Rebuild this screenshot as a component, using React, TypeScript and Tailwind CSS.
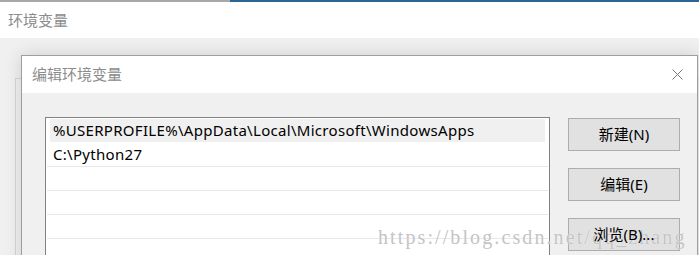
const rows = ["%USERPROFILE%\\AppData\\Local\\Microsoft\\WindowsApps", "C:\\Python27", "", "", "", ""];

const buttons = ["新建(N)", "编辑(E)", "浏览(B)..."];

function CloseIcon() {
  return (
    <svg width="11" height="11" viewBox="0 0 11 11" className="text-[#7a7a7a]">
      <path d="M0.5 0.5 L10.5 10.5 M10.5 0.5 L0.5 10.5" stroke="currentColor" strokeWidth="1" fill="none" />
    </svg>
  );
}

export default function App() {
  return (
    <div className="relative w-[699px] h-[255px] overflow-hidden bg-[#f0f0f0] font-['Noto_Sans','Noto_Sans_CJK_SC',sans-serif] text-[15px] text-black">
      {/* parent window */}
      <div className="flex h-[2px]">
        <div className="w-[230px] bg-[#a8a8a8]" />
        <div className="flex-1 bg-[#2b6696]" />
      </div>
      <div className="h-[36px] bg-white flex items-center pl-[8px] text-[#8c8c8c]">环境变量</div>
      <div className="ml-[15px] mt-[40px] h-[200px] border-l border-t border-[#d6d6d6]" />

      {/* dialog */}
      <div className="absolute left-[21px] top-[55px] w-[677px] h-[215px] border border-[#9e9e9e] bg-[#f0f0f0] shadow-[0_0_16px_rgba(0,0,0,0.14)]">
        <div className="h-[37px] bg-white flex items-center justify-between pl-[10px] pr-[14px]">
          <span className="text-[#8c8c8c]">编辑环境变量</span>
          <CloseIcon />
        </div>
        <div className="flex pt-[24px] pl-[23px]">
          <div className="w-[505px] h-[150px] border border-[#828282] bg-white pt-px px-px">
            {rows.map((r, i) => (
              <div key={i} className={i === 0 ? "h-[24px] border-b border-white" : "h-[24px] border-b border-[#e8e8e8]"}>
                <div className={i === 0 ? "h-full mx-[3px] bg-[#f0f0f0] flex items-center px-[3px] leading-none tracking-[0.3px]" : "h-full mx-[3px] flex items-center px-[3px] leading-none tracking-[0.3px]"}>
                  {r}
                </div>
              </div>
            ))}
          </div>
          <div className="ml-[18px] mt-px flex flex-col gap-[17px]">
            {buttons.map((b) => (
              <button key={b} className="w-[112px] h-[33px] border border-[#adadad] bg-[#e1e1e1] flex items-center justify-center leading-none">
                <span className="relative z-20">{b}</span>
              </button>
            ))}
          </div>
        </div>
      </div>

      {/* watermark */}
      <div className="absolute z-10 left-[378px] top-[227px] leading-none text-[20px] tracking-[2.1px] font-['Liberation_Serif',serif] text-[#c4c4c4] [text-shadow:0_0_1px_white] whitespace-nowrap pointer-events-none">
        https://blog.csdn.net/qq_zhang
      </div>
    </div>
  );
}
